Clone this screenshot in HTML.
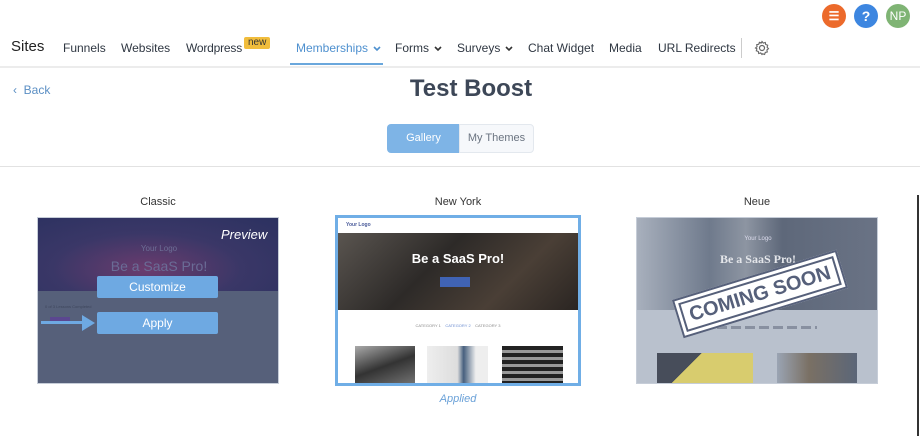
<!DOCTYPE html>
<html><head><meta charset="utf-8"><style>
*{margin:0;padding:0;box-sizing:border-box}
body{width:920px;height:436px;overflow:hidden;background:#fff;font-family:"Liberation Sans",sans-serif;position:relative;color:#3d4757}
.a{position:absolute}
.nav{font-size:12px;color:#2f3742;top:41px;white-space:nowrap}
.circ{position:absolute;width:24px;height:24px;border-radius:50%;color:#fff;font-size:12px;font-weight:bold;display:flex;align-items:center;justify-content:center;top:4px}
.chev{display:inline-block;margin-left:5px;vertical-align:middle}
</style></head><body>
<div class="circ" style="left:822px;background:#ec6a2b">☰</div>
<div class="circ" style="left:854px;background:#3d86e0;font-size:14px">?</div>
<div class="circ" style="left:886px;background:#7fb474;font-weight:normal">NP</div>

<div class="a" style="left:11px;top:38px;font-size:15px;color:#222">Sites</div>
<div class="a nav" style="left:63px">Funnels</div>
<div class="a nav" style="left:121px">Websites</div>
<div class="a nav" style="left:186px;letter-spacing:-0.2px">Wordpress</div>
<div class="a" style="left:244px;top:37px;background:#f1bd3c;color:#333;font-size:10px;padding:0 4px;height:12px;line-height:12px;border-radius:2px">new</div>
<div class="a nav" style="left:296px;color:#4e90cf">Memberships<svg class="chev" width="8" height="6" viewBox="0 0 8 6"><path d="M1 1l3 3 3-3" fill="none" stroke="#4e90cf" stroke-width="1.6"/></svg></div>
<div class="a" style="left:290px;top:63px;width:93px;height:2px;background:#6aa7dc"></div>
<div class="a nav" style="left:395px">Forms<svg class="chev" width="8" height="6" viewBox="0 0 8 6"><path d="M1 1l3 3 3-3" fill="none" stroke="#333" stroke-width="1.6"/></svg></div>
<div class="a nav" style="left:457px">Surveys<svg class="chev" width="8" height="6" viewBox="0 0 8 6"><path d="M1 1l3 3 3-3" fill="none" stroke="#333" stroke-width="1.6"/></svg></div>
<div class="a nav" style="left:528px">Chat Widget</div>
<div class="a nav" style="left:609px">Media</div>
<div class="a nav" style="left:658px">URL Redirects</div>
<div class="a" style="left:741px;top:38px;width:1px;height:20px;background:#ccc"></div>
<svg class="a" style="left:754px;top:40px" width="16" height="16" viewBox="0 0 16 16"><circle cx="8" cy="8" r="2.5" fill="none" stroke="#666" stroke-width="1.2"/><path d="M8 1.5l1.3 1.6 2-.6.4 2 2 .7-.6 2 1.4 1.5-1.6 1.3.4 2-2 .4-.7 2-2-.6L8 14.5l-1.3-1.6-2 .6-.4-2-2-.7.6-2L1.5 8l1.6-1.3-.4-2 2-.4.7-2 2 .6z" fill="none" stroke="#666" stroke-width="1.1"/></svg>
<div class="a" style="left:0;top:66px;width:920px;height:2px;background:#ececec"></div>

<div class="a" style="left:13px;top:83px;font-size:12px;color:#5b8fc4">‹&nbsp; Back</div>
<div class="a" style="left:0;width:942px;top:75px;text-align:center;font-size:24px;font-weight:bold;color:#3d4757">Test Boost</div>
<div class="a" style="left:387px;top:124px;width:73px;height:29px;background:#7eb4e6;border-radius:4px 0 0 4px;color:#fff;font-size:11px;text-align:center;line-height:29px">Gallery</div>
<div class="a" style="left:459px;top:124px;width:75px;height:29px;background:#f6f8fb;border:1px solid #e3e8ee;border-radius:0 4px 4px 0;color:#6a7380;font-size:11px;text-align:center;line-height:27px">My Themes</div>
<div class="a" style="left:0;top:166px;width:920px;height:1px;background:#e2e2e2"></div>
<div class="a" style="left:917px;top:195px;width:2px;height:241px;background:#333"></div>

<div class="a" style="left:37px;width:242px;top:196px;text-align:center;font-size:11px;color:#333">Classic</div>
<div class="a" style="left:336px;width:244px;top:196px;text-align:center;font-size:11px;color:#333">New York</div>
<div class="a" style="left:636px;width:242px;top:196px;text-align:center;font-size:11px;color:#333">Neue</div>

<!-- Classic -->
<div class="a" style="left:37px;top:217px;width:242px;height:167px;background:#56607a;border:1px solid #c6cdd8;overflow:hidden">
 <div class="a" style="left:0;top:0;width:242px;height:73px;background:radial-gradient(ellipse at 45% 70%,#6b3c6e 0%,#3a3767 50%,#2b3160 100%)"></div>
 <div class="a" style="left:0;width:242px;text-align:center;top:26px;font-size:8px;color:#6d6f96">Your Logo</div>
 <div class="a" style="left:0;width:242px;text-align:center;top:40px;font-size:14px;color:#6a6c96">Be a SaaS Pro!</div>
 <div class="a" style="left:183px;top:9px;font-size:13px;font-style:italic;color:#fff">Preview</div>
 <div class="a" style="left:7px;top:86px;font-size:4px;color:#3e465c">0 of 3 Lessons Completed</div>
 <div class="a" style="left:12px;top:99px;width:20px;height:4px;background:#5b4790"></div>
</div>
<div class="a" style="left:97px;top:276px;width:121px;height:22px;background:#6ea9e2;border-radius:2px;color:#fff;font-size:12px;text-align:center;line-height:22px">Customize</div>
<div class="a" style="left:97px;top:312px;width:121px;height:22px;background:#6ea9e2;border-radius:2px;color:#fff;font-size:12px;text-align:center;line-height:22px">Apply</div>
<div class="a" style="left:41px;top:321px;width:42px;height:3px;background:#6ea9e2"></div>
<div class="a" style="left:82px;top:315px;width:0;height:0;border-left:13px solid #6ea9e2;border-top:8px solid transparent;border-bottom:8px solid transparent"></div>

<!-- New York -->
<div class="a" style="left:335px;top:215px;width:246px;height:171px;border:3px solid #70aee6;background:#fff;overflow:hidden">
 <div class="a" style="left:0;top:0;width:240px;height:15px;background:#fff;font-size:5px;color:#4a5b9a;padding:4px 8px;font-weight:bold">Your Logo</div>
 <div class="a" style="left:0;top:15px;width:240px;height:77px;background:linear-gradient(135deg,#5a5550,#2d2a28 40%,#4a3f36 70%,#2a2522)"></div>
 <div class="a" style="left:0;top:33px;width:240px;text-align:center;font-size:13px;font-weight:bold;color:#fff">Be a SaaS Pro!</div>
 <div class="a" style="left:102px;top:59px;width:30px;height:10px;background:#4063b4"></div>
 <div class="a" style="left:0;top:105px;width:240px;text-align:center;font-size:4px;color:#888">CATEGORY 1 &nbsp;&nbsp; <span style="color:#6a8cd0">CATEGORY 2</span> &nbsp;&nbsp; CATEGORY 3</div>
 <div class="a" style="left:17px;top:128px;width:60px;height:40px;background:linear-gradient(160deg,#aaa,#333 50%,#777)"></div>
 <div class="a" style="left:89px;top:128px;width:61px;height:40px;background:linear-gradient(90deg,#eee,#ddd 50%,#47607e 60%,#eee 80%)"></div>
 <div class="a" style="left:164px;top:128px;width:61px;height:40px;background:repeating-linear-gradient(180deg,#222 0 4px,#999 4px 7px)"></div>
</div>
<div class="a" style="left:336px;width:244px;top:393px;text-align:center;font-size:11px;font-style:italic;color:#6aa1d8">Applied</div>

<!-- Neue -->
<div class="a" style="left:636px;top:217px;width:242px;height:167px;background:#b9c1cd;border:1px solid #c6cdd8;overflow:hidden">
 <div class="a" style="left:0;top:0;width:242px;height:92px;background:linear-gradient(90deg,#a8b0bd,#6f7a8c 30%,#8d95a2 45%,#5e687a 60%,#6a7385)"></div>
 <div class="a" style="left:0;width:242px;text-align:center;top:18px;font-size:6px;color:#dde">Your Logo</div>
 <div class="a" style="left:0;width:242px;text-align:center;top:34px;font-size:12px;font-weight:bold;font-family:'Liberation Serif',serif;color:#e4e6ea">Be a SaaS Pro!</div>
 <div class="a" style="left:80px;top:108px;width:100px;height:3px;background:repeating-linear-gradient(90deg,#8890a0 0 10px,transparent 10px 14px)"></div>
 <div class="a" style="left:20px;top:135px;width:96px;height:32px;background:linear-gradient(135deg,#474d5a 35%,#d8cc6e 35%)"></div>
 <div class="a" style="left:140px;top:135px;width:80px;height:32px;background:linear-gradient(90deg,#9aa4b3,#7a7064 40%,#5b6678)"></div>
</div>
<div class="a" style="left:674px;top:274px;width:172px;height:40px;background:#fff;border:2px solid #56607a;transform:rotate(-17deg);transform-origin:center;display:flex;align-items:center;justify-content:center">
 <div style="border:2px solid #56607a;width:162px;height:30px;text-align:center;font-size:20px;font-weight:bold;color:#56607a;line-height:26px">COMING SOON</div>
</div>
</body></html>
